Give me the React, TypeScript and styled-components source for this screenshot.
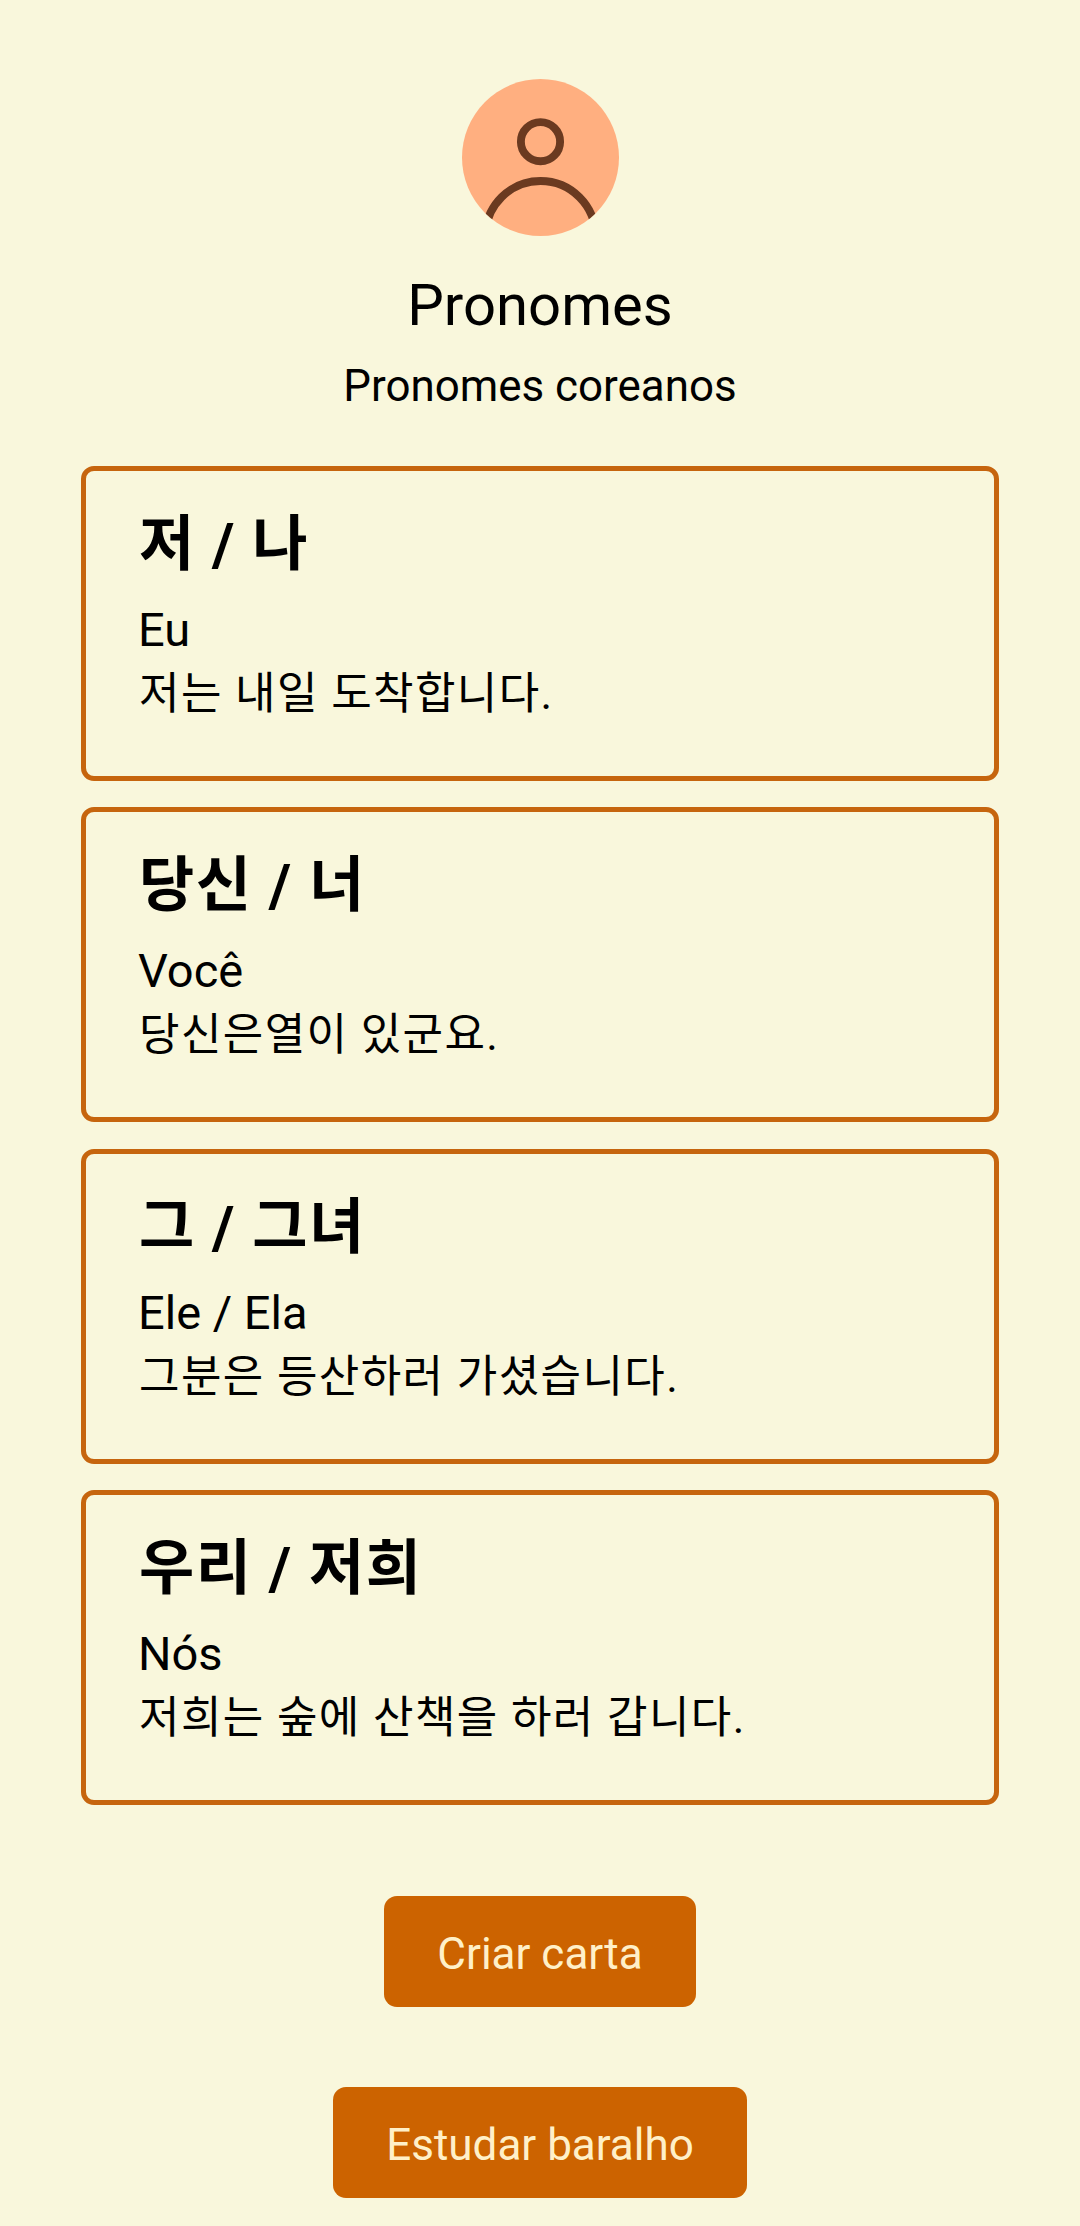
import React from "react";
import styled, { createGlobalStyle } from "styled-components";

const Global = createGlobalStyle`
  * { box-sizing: border-box; }
  body { margin: 0; background: #f9f7dc; color: #000; font-family: Roboto, "Noto Sans CJK KR", sans-serif; }
`;

const Page = styled.main`
  height: 2226px;
  overflow: hidden;
  padding: 79px 81px 0;
  display: flex;
  flex-direction: column;
  align-items: center;
`;

const Avatar = styled.div`
  width: 157px;
  height: 157px;
  margin-left: 1px;
  border-radius: 50%;
  overflow: hidden;
  background: #ffaf80;
  svg { display: block; }
`;

const Title = styled.h1`
  margin: 34px 0 0;
  font-size: 58px;
  line-height: 70px;
  font-weight: 400;
`;

const Subtitle = styled.p`
  margin: 20px 0 0;
  font-size: 43.9px;
  line-height: 52px;
`;

const Cards = styled.section`
  margin-top: 54px;
  width: 100%;
  display: flex;
  flex-direction: column;
  gap: 26.33px;
`;

const Card = styled.article`
  height: 315px;
  padding: 35px 52px;
  border: 5px solid #c6650e;
  border-radius: 13px;
  white-space: nowrap;
`;

const Term = styled.h2`
  margin: 0;
  padding-left: 1px;
  font-size: 60px;
  line-height: 78px;
  font-weight: 700;
  letter-spacing: 1.5px;
`;

const Meaning = styled.p`
  margin: 16px 0 0;
  font-size: 47px;
  line-height: 60px;
`;

const Example = styled.p`
  margin: 0;
  padding-left: 1px;
  font-size: 44px;
  line-height: 68px;
  letter-spacing: 1.4px;
`;

const Action = styled.button<{ $top: number }>`
  margin: ${(p) => p.$top}px 0 0;
  height: 111px;
  flex-shrink: 0;
  padding: 5px 53.2px 0;
  border: 0;
  border-radius: 13px;
  background: #cc6300;
  color: #fff0c8;
  font: 400 44px Roboto, sans-serif;
`;

const cards = [
  { term: "저 / 나", meaning: "Eu", example: "저는 내일 도착합니다." },
  { term: "당신 / 너", meaning: "Você", example: "당신은열이 있군요." },
  { term: "그 / 그녀", meaning: "Ele / Ela", example: "그분은 등산하러 가셨습니다." },
  { term: "우리 / 저희", meaning: "Nós", example: "저희는 숲에 산책을 하러 갑니다." },
];

export default function App() {
  return (
    <>
      <Global />
      <Page>
        <Avatar>
          <svg width="157" height="157" viewBox="0 0 157 157" fill="none" stroke="#6b3a20" strokeWidth="7.9">
            <circle cx="78.5" cy="62.7" r="19.6" />
            <circle cx="78.5" cy="157" r="55" />
          </svg>
        </Avatar>
        <Title>Pronomes</Title>
        <Subtitle>Pronomes coreanos</Subtitle>
        <Cards>
          {cards.map((c) => (
            <Card key={c.term}>
              <Term>{c.term}</Term>
              <Meaning>{c.meaning}</Meaning>
              <Example>{c.example}</Example>
            </Card>
          ))}
        </Cards>
        <Action $top={91}>Criar carta</Action>
        <Action $top={80}>Estudar baralho</Action>
      </Page>
    </>
  );
}
